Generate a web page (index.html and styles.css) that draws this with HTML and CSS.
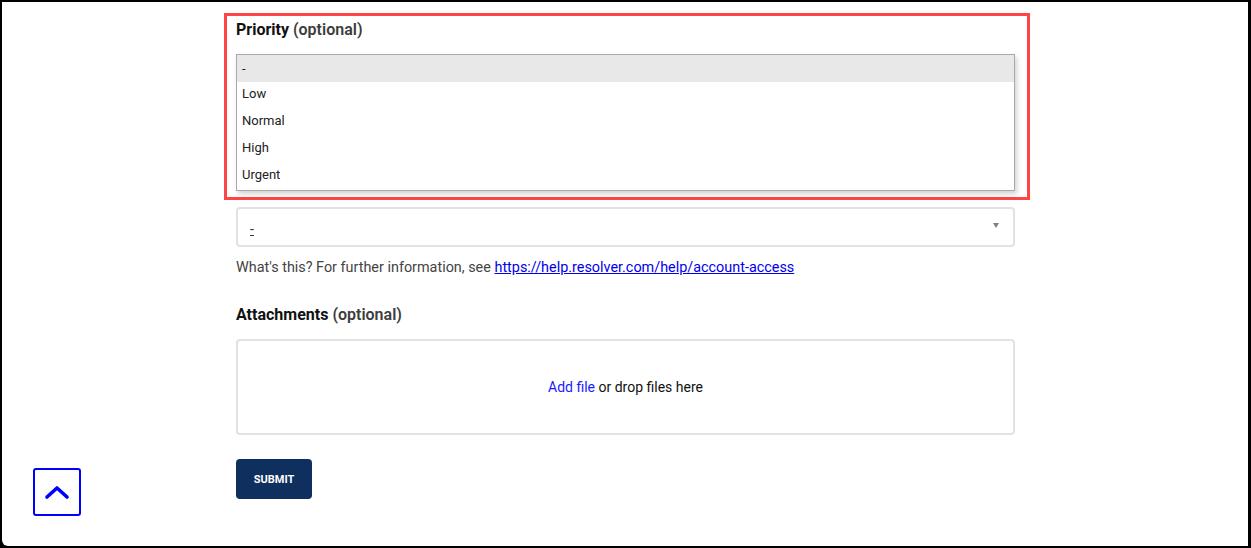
FILE: index.html
```html
<!DOCTYPE html>
<html lang="en">
<head>
<meta charset="utf-8">
<title>Priority</title>
<link rel="stylesheet" href="styles.css">
</head>
<body>
<div class="frame">
  <main class="form">
    <section class="highlight">
      <div class="label">Priority <span class="opt">(optional)</span></div>
      <div class="listbox">
        <div class="option selected">-</div>
        <div class="option">Low</div>
        <div class="option">Normal</div>
        <div class="option">High</div>
        <div class="option">Urgent</div>
      </div>
    </section>
    <div class="select">
      <span class="select-value">-</span>
      <span class="caret"></span>
    </div>
    <p class="help">What's this? For further information, see <a href="#">https://help.resolver.com/help/account-access</a></p>
    <div class="label attach-label">Attachments <span class="opt">(optional)</span></div>
    <div class="dropzone"><a class="add" href="#">Add file</a>&nbsp;or drop files here</div>
    <button class="submit" type="button">SUBMIT</button>
  </main>
  <button class="to-top" type="button" aria-label="Back to top">
    <svg width="26" height="16" viewBox="0 0 26 16"><path d="M3 13 L13 4 L23 13" fill="none" stroke="#0000ff" stroke-width="3.6" stroke-linecap="round" stroke-linejoin="round"/></svg>
  </button>
</div>
</body>
</html>
```

FILE: styles.css
```css
html, body {
  margin: 0;
  padding: 0;
  background: #000;
  height: 548px;
  overflow: hidden;
}
body {
  font-family: Roboto, "Liberation Sans", Arial, sans-serif;
  color: #111;
}
.frame {
  position: relative;
  margin: 2px 3px 0 2px;
  height: 544px;
  background: #fff;
  border-bottom-left-radius: 6px;
}
.form {
  margin-left: 234px;
  width: 779px;
  padding-top: 11px;
}
.highlight {
  margin: 0 -15px 0 -12px;
  border: 3px solid #ff4444;
  padding: 4px 12px 6px 9px;
}
.label {
  font-size: 16px;
  font-weight: 700;
  line-height: 19px;
  color: #111;
}
.opt {
  color: #3d3d3d;
  font-weight: 600;
}
.listbox {
  margin-top: 15px;
  border: 1px solid #a9a9a9;
  background: #fff;
  box-shadow: 2px 3px 5px rgba(0,0,0,0.18);
}
.option {
  height: 27px;
  line-height: 24px;
  padding-left: 5px;
  font-size: 13px;
  color: #222;
}
.option.selected {
  background: #e8e8e8;
  line-height: 27px;
}
.select {
  margin-top: 7px;
  height: 36px;
  border: 2px solid #dfe2e6;
  border-radius: 4px;
  display: flex;
  align-items: center;
  justify-content: space-between;
  padding: 0 14px 0 12px;
}
.select-value {
  font-size: 14px;
  color: #333;
  text-decoration: underline;
  padding-top: 4px;
}
.caret {
  width: 0;
  height: 0;
  border-left: 3px solid transparent;
  border-right: 3px solid transparent;
  border-top: 5px solid #7a818c;
  margin-bottom: 4px;
}
.help {
  margin: 11px 0 0;
  font-size: 14.4px;
  line-height: 20px;
  color: #444;
}
.help a {
  color: #0000ee;
  text-decoration: underline;
}
.attach-label {
  margin-top: 27px;
}
.dropzone {
  margin-top: 15px;
  height: 92px;
  border: 2px solid #dfe2e6;
  border-radius: 4px;
  display: flex;
  align-items: center;
  justify-content: center;
  font-size: 14px;
  color: #111;
}
.add {
  color: #1a1aff;
  text-decoration: none;
}
.submit {
  margin-top: 24px;
  width: 76px;
  height: 40px;
  background: #0f2f5e;
  color: #fff;
  border: none;
  border-radius: 4px;
  font-family: Roboto, "Liberation Sans", Arial, sans-serif;
  font-size: 11px;
  font-weight: 700;
  display: block;
  padding: 0;
}
.to-top {
  position: absolute;
  left: 31px;
  top: 466px;
  width: 48px;
  height: 48px;
  border: 2px solid #0000ff;
  border-radius: 3px;
  background: #fff;
  display: flex;
  align-items: center;
  justify-content: center;
  padding: 0;
}
```
